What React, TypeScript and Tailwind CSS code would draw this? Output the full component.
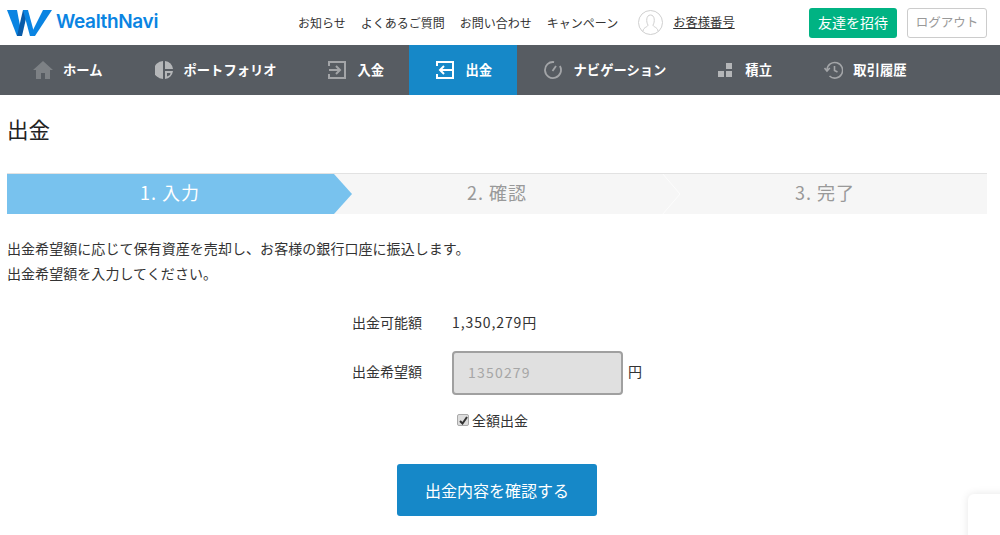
const FONT = "font-['Noto_Sans_CJK_JP','Noto_Sans',sans-serif]";

const topLinks = ["お知らせ", "よくあるご質問", "お問い合わせ", "キャンペーン"];

function HomeIcon() {
  return (
    <svg width="20" height="18" viewBox="0 0 20 18" fill="#7d8185">
      <path d="M10 0 L20 9 L17 9 L17 18 L12 18 L12 12 L8 12 L8 18 L3 18 L3 9 L0 9 Z" />
    </svg>
  );
}

function PieIcon() {
  return (
    <svg width="18" height="18" viewBox="0 0 18 18" fill="#b4b6b8">
      <path d="M8 0 L8 18 A9 9 0 0 1 8 0 Z" />
      <path d="M10 0 A9 9 0 0 1 18 8 L10 8 Z" />
      <path fillRule="evenodd" d="M10 10 L18 10 A9 9 0 0 1 10 18 Z M12 12 L15.5 12 L15 14 L12 15.5 Z" />
    </svg>
  );
}

function DepositIcon() {
  return (
    <svg width="18" height="18" viewBox="0 0 18 18" fill="none" stroke="#a3a5a8" strokeWidth="2">
      <path d="M1 5 L1 1 L17 1 L17 17 L1 17 L1 13" />
      <path d="M1 9 L12 9 M8 5 L12 9 L8 13" />
    </svg>
  );
}

function WithdrawIcon() {
  return (
    <svg width="18" height="18" viewBox="0 0 18 18" fill="none" stroke="#ffffff" strokeWidth="2">
      <path d="M1 5 L1 1 L17 1 L17 17 L1 17 L1 13" />
      <path d="M16 9 L4 9 M8 5 L4 9 L8 13" />
    </svg>
  );
}

function GaugeIcon() {
  return (
    <svg width="18" height="18" viewBox="0 0 18 18" fill="none" stroke="#a3a5a8" strokeWidth="1.8">
      <path d="M10.1 1.1 A8 8 0 1 0 15.9 5" />
      <path d="M8.5 10 L12 5" />
    </svg>
  );
}

function BlocksIcon() {
  return (
    <svg width="14" height="14" viewBox="0 0 14 14" fill="#b4b6b8">
      <rect x="8" y="0" width="6" height="6" />
      <rect x="0" y="8" width="6" height="6" />
      <rect x="8" y="8" width="6" height="6" />
    </svg>
  );
}

function HistoryIcon() {
  return (
    <svg width="19" height="18" viewBox="0 0 19 18" fill="none" stroke="#a3a5a8" strokeWidth="1.6">
      <path d="M3 9 A7.8 7.8 0 1 1 5.5 15" />
      <path d="M0.5 7 L3 10 L5.8 7" />
      <path d="M10.5 5 L10.5 9.5 L13.5 11" />
    </svg>
  );
}

const navItems = [
  { label: "ホーム", icon: <HomeIcon />, pl: "pl-[27px] pr-[26px] gap-[10px]" },
  { label: "ポートフォリオ", icon: <PieIcon />, pl: "pl-[26px] pr-[25px] gap-[11px]" },
  { label: "入金", icon: <DepositIcon />, pl: "pl-[26px] pr-[24.4px] gap-[12px]" },
  { label: "出金", icon: <WithdrawIcon />, pl: "pl-[27px] pr-[24.4px] gap-[12px] bg-[#1688c8]" },
  { label: "ナビゲーション", icon: <GaugeIcon />, pl: "pl-[27px] pr-[25px] gap-[12px]" },
  { label: "積立", icon: <BlocksIcon />, pl: "pl-[27px] pr-[26px] gap-[13px]" },
  { label: "取引履歴", icon: <HistoryIcon />, pl: "pl-[26.4px] pr-[26px] gap-[10px]" },
];

function Logo() {
  return (
    <div className="flex w-[151px] items-center">
      <svg width="45" height="26" viewBox="0 0 45 26">
        <path d="M0 0 L10 0 L15 26 L10 26 Z" fill="#0a84e2" />
        <path d="M16 0 L21 0 L15 26 L10 26 Z" fill="#0a5ba8" />
        <path d="M16 0 L21 0 L28 26 L23 26 Z" fill="#0a84e2" />
        <path d="M36 0 L45 0 L28 26 L23 26 Z" fill="#0a84e2" />
      </svg>
      <span className="ml-[4px] font-['Inter','Liberation_Sans',sans-serif] text-[19px] font-semibold tracking-[-0.35px] text-[#0a84e2]">
        WealthNavi
      </span>
    </div>
  );
}

export default function App() {
  return (
    <div className={`relative h-[535px] w-[1000px] overflow-hidden bg-white text-[#333] ${FONT}`}>
      {/* ヘッダー */}
      <header className="flex h-[45px] items-center pl-[7px] pr-[13px]">
        <Logo />
        <nav className="ml-[140px] flex gap-[15px] text-[12px] text-[#333]">
          {topLinks.map((t) => (
            <a key={t}>{t}</a>
          ))}
        </nav>
        <svg className="ml-[20px]" width="25" height="25" viewBox="0 0 25 25" fill="none" stroke="#cfcfcf">
          <circle cx="12.5" cy="12.5" r="12" />
          <path d="M5 21 C5.5 17 10 17 10 15 C8 12 8 5 12.5 5 C17 5 17 12 15 15 C15 17 19.5 17 20 21" />
        </svg>
        <a className="ml-[10px] text-[12.3px] leading-[15px] underline">お客様番号</a>
        <a className="ml-auto flex h-[30px] w-[88px] items-center justify-center rounded-[3px] bg-[#00b383] text-[14px] text-white">
          友達を招待
        </a>
        <a className="ml-[10px] flex h-[30px] w-[80px] items-center justify-center rounded-[3px] border border-[#ccc] text-[12.5px] text-[#999]">
          ログアウト
        </a>
      </header>

      {/* グローバルナビ */}
      <nav className="flex h-[50px] bg-[#575c62] pl-[6px]">
        {navItems.map((n) => (
          <a key={n.label} className={`flex items-center ${n.pl} text-[13.3px] font-bold text-white`}>
            {n.icon}
            <span>{n.label}</span>
          </a>
        ))}
      </nav>

      <main className="px-[7px]">
        <h1 className="mt-[19px] text-[21.5px] leading-[30px] text-[#222]">出金</h1>

        {/* ステップ */}
        <ol className="relative mt-[29px] flex h-[41px] w-[980px] border-t border-[#e2e2e2] bg-[#f6f6f6] text-[18px] tracking-[1px] text-[#999]">
          <li className="flex w-[345px] items-center justify-center bg-[#78c2ee] pb-[3px] pr-[19px] text-white [clip-path:polygon(0_0,327px_0,345px_50%,327px_100%,0_100%)]">
            1. 入力
          </li>
          <li className="flex w-[327px] items-center justify-center pb-[3px] pr-[37px]">2. 確認</li>
          <li className="flex flex-1 items-center justify-center pb-[3px] pr-[16px]">3. 完了</li>
          <svg className="absolute left-[655px] top-0" width="20" height="40" viewBox="0 0 20 40" fill="none" stroke="#ffffff" strokeOpacity="0.7">
            <path d="M0 -1 L18 20 L0 41" />
          </svg>
        </ol>

        <p className="mt-[22px] text-[14px] leading-[25px] tracking-[0.06px] text-[#333]">
          出金希望額に応じて保有資産を売却し、お客様の銀行口座に振込します。
          <br />
          出金希望額を入力してください。
        </p>

        {/* 入力フォーム */}
        <div className="mt-[26px] flex h-[20px] items-center pl-[345px] text-[14px]">
          <span className="w-[100px]">出金可能額</span>
          <span className="tracking-[0.9px]">1,350,279円</span>
        </div>
        <div className="mt-[19px] flex items-center pl-[345px] text-[14px]">
          <span className="w-[100px] pb-[3px]">出金希望額</span>
          <input
            disabled
            value="1350279"
            readOnly
            className="h-[44px] w-[171px] rounded-[4px] border-2 border-[#a0a0a0] bg-[#e0e0e0] px-[14px] pb-[2px] text-[14px] tracking-[1.2px] text-[#a6a6a6]"
          />
          <span className="ml-[5px] pb-[3px]">円</span>
        </div>
        <label className="mt-[15px] flex h-[20px] items-center pl-[450px] text-[14px]">
          <span className="flex h-[12px] w-[12px] items-center justify-center rounded-[2px] border border-[#aaa] bg-[#ddd]">
            <svg width="9" height="9" viewBox="0 0 9 9" fill="none" stroke="#333" strokeWidth="2">
              <path d="M1 5 L3.5 7.5 L8 1" />
            </svg>
          </span>
          <span className="ml-[3px]">全額出金</span>
        </label>
        <div className="mt-[34px] flex pl-[390px]">
          <button className="h-[52px] w-[200px] rounded-[3px] bg-[#1688c8] text-[16px] text-white">
            出金内容を確認する
          </button>
        </div>
      </main>

      {/* 右下のウィジェット */}
      <div className="absolute left-[968px] top-[494px] h-[60px] w-[60px] rounded-[6px] bg-white shadow-[0_0_8px_rgba(0,0,0,0.1)]" />
    </div>
  );
}
